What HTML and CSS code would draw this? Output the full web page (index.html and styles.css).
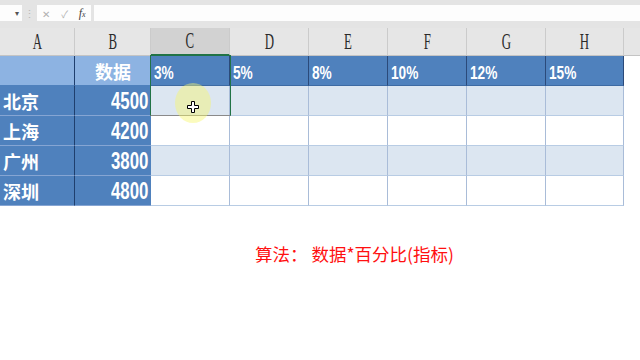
FILE: index.html
```html
<!DOCTYPE html>
<html lang="zh-CN">
<head>
    <meta charset="UTF-8">
    <title>百分比计算</title>
    <link rel="stylesheet" href="styles.css">
</head>
<body>
    <div class="toolbar">
        <div class="name-box"><span class="caret">▾</span></div>
        <div class="grip">⋮</div>
        <div class="fx-buttons">
            <span class="btn">✕</span>
            <span class="btn">✓</span>
            <span class="fx">f<i>x</i></span>
        </div>
        <div class="formula"></div>
    </div>

    <div class="sheet">
        <div class="grid">
            <!-- column headers -->
            <div class="col-head"><span class="letter">A</span></div>
            <div class="col-head"><span class="letter">B</span></div>
            <div class="col-head active"><span class="letter">C</span></div>
            <div class="col-head"><span class="letter">D</span></div>
            <div class="col-head"><span class="letter">E</span></div>
            <div class="col-head"><span class="letter">F</span></div>
            <div class="col-head"><span class="letter">G</span></div>
            <div class="col-head"><span class="letter">H</span></div>
            <div class="col-head filler"></div>

            <!-- row 1: rates -->
            <div class="cell title key"></div>
            <div class="cell title center">数据</div>
            <div class="cell rate"><span class="pct">3%</span></div>
            <div class="cell rate"><span class="pct">5%</span></div>
            <div class="cell rate"><span class="pct">8%</span></div>
            <div class="cell rate"><span class="pct">10%</span></div>
            <div class="cell rate"><span class="pct">12%</span></div>
            <div class="cell rate"><span class="pct">15%</span></div>
            <div class="cell blank"></div>

            <div class="cell city key">北京</div>
            <div class="cell city num"><span class="digits">4500</span></div>
            <div class="cell data band"></div>
            <div class="cell data band"></div>
            <div class="cell data band"></div>
            <div class="cell data band"></div>
            <div class="cell data band"></div>
            <div class="cell data band"></div>
            <div class="cell blank"></div>

            <div class="cell city key">上海</div>
            <div class="cell city num"><span class="digits">4200</span></div>
            <div class="cell data"></div>
            <div class="cell data"></div>
            <div class="cell data"></div>
            <div class="cell data"></div>
            <div class="cell data"></div>
            <div class="cell data"></div>
            <div class="cell blank"></div>

            <div class="cell city key">广州</div>
            <div class="cell city num"><span class="digits">3800</span></div>
            <div class="cell data band"></div>
            <div class="cell data band"></div>
            <div class="cell data band"></div>
            <div class="cell data band"></div>
            <div class="cell data band"></div>
            <div class="cell data band"></div>
            <div class="cell blank"></div>

            <div class="cell city key">深圳</div>
            <div class="cell city num"><span class="digits">4800</span></div>
            <div class="cell data"></div>
            <div class="cell data"></div>
            <div class="cell data"></div>
            <div class="cell data"></div>
            <div class="cell data"></div>
            <div class="cell data"></div>
            <div class="cell blank"></div>
        </div>

        <!-- active selection and pointer highlight -->
        <div class="selection"></div>
        <div class="pointer-glow"></div>
        <svg class="pointer" width="12" height="12" viewBox="0 0 12 12">
            <path d="M4.5 0.5h3v4h4v3h-4v4h-3v-4h-4v-3h4z" fill="#fff" stroke="#000" stroke-width="1"/>
        </svg>
    </div>

    <p class="note">算法：&nbsp;数据*百分比(指标)</p>
</body>
</html>
```

FILE: styles.css
```css
body {
    margin: 0;
    width: 640px;
    height: 360px;
    overflow: hidden;
    background-color: #ffffff;
    font-family: "Noto Sans CJK SC", sans-serif;
}

/* formula bar */
.toolbar {
    display: flex;
    height: 16px;
    padding: 5px 0 7px;
    background-color: #e4e4e4;
}

.name-box {
    width: 22px;
    background-color: #fdfdfd;
    position: relative;
}

.caret {
    position: absolute;
    right: 3px;
    top: 0;
    font-size: 8px;
    line-height: 16px;
    color: #555;
}

.grip {
    width: 15px;
    text-align: center;
    font-size: 11px;
    line-height: 16px;
    color: #b8b8b8;
}

.fx-buttons {
    width: 54px;
    display: flex;
    align-items: center;
    justify-content: space-around;
    background-color: #fdfdfd;
    font-size: 10px;
    color: #b0b0b0;
}

.fx {
    font-family: "Liberation Serif", serif;
    font-style: italic;
    font-size: 12px;
    color: #444;
}

.fx i {
    font-size: 8px;
}

.formula {
    flex: 1;
    margin-left: 3px;
    background-color: #fdfdfd;
}

/* worksheet */
.sheet {
    position: relative;
}

.grid {
    display: grid;
    grid-template-columns: 75px 76px 79px 79px 79px 79px 79px 78px 16px;
    grid-template-rows: 28px repeat(5, 30px);
}

.col-head {
    box-sizing: border-box;
    background-color: #e6e6e6;
    border-right: 1px solid #cbcbcb;
    border-bottom: 1px solid #c4c4c4;
    display: flex;
    align-items: center;
    justify-content: center;
}

.col-head.active {
    background-color: #d2d2d2;
    border-bottom: 2px solid #217346;
}

.col-head.filler {
    border-right: 0;
}

.letter {
    display: inline-block;
    font-family: "Liberation Serif", serif;
    font-size: 23px;
    color: #2a2a2a;
    transform: scaleX(0.56);
}

.cell {
    box-sizing: border-box;
    color: #ffffff;
    font-weight: 700;
    font-size: 18px;
    line-height: 30px;
    padding: 0 3px;
    white-space: nowrap;
}

.title {
    background-color: #8db3e2;
    border-bottom: 1px solid #4f81bd;
}

.center {
    text-align: center;
}

.key {
    border-right: 1px solid #1f3f6e;
}

.rate {
    background-color: #4f81bd;
    border-right: 1px solid #2b4a7a;
    border-bottom: 1px solid #3d6aa3;
}

.pct {
    display: inline-block;
    font-family: "Liberation Sans", sans-serif;
    font-size: 19px;
    transform: scaleX(0.72);
    transform-origin: left center;
}

.city {
    background-color: #4f81bd;
    border-bottom: 1px solid #86a5d3;
}

.num {
    text-align: right;
}

.digits {
    display: inline-block;
    font-family: "Liberation Sans", sans-serif;
    font-size: 24px;
    font-weight: 700;
    transform: scaleX(0.7);
    transform-origin: right center;
}

.data {
    background-color: #ffffff;
    border-right: 1px solid #a9bcd8;
    border-bottom: 1px solid #b8cce4;
}

.data.band {
    background-color: #dce6f1;
}

.blank {
    background-color: #ffffff;
}

.selection {
    position: absolute;
    left: 150px;
    top: 27px;
    width: 79px;
    height: 59px;
    border: 1px solid #217346;
    border-bottom-color: #8a8a8a;
    pointer-events: none;
}

.pointer-glow {
    position: absolute;
    left: 175px;
    top: 55px;
    width: 36px;
    height: 40px;
    border-radius: 50%;
    background-color: rgba(246, 246, 110, 0.45);
}

.pointer {
    position: absolute;
    left: 187px;
    top: 73px;
}

/* formula note */
.note {
    margin: 35px 0 0 255px;
    font-size: 17.5px;
    color: #ff1010;
}
```
